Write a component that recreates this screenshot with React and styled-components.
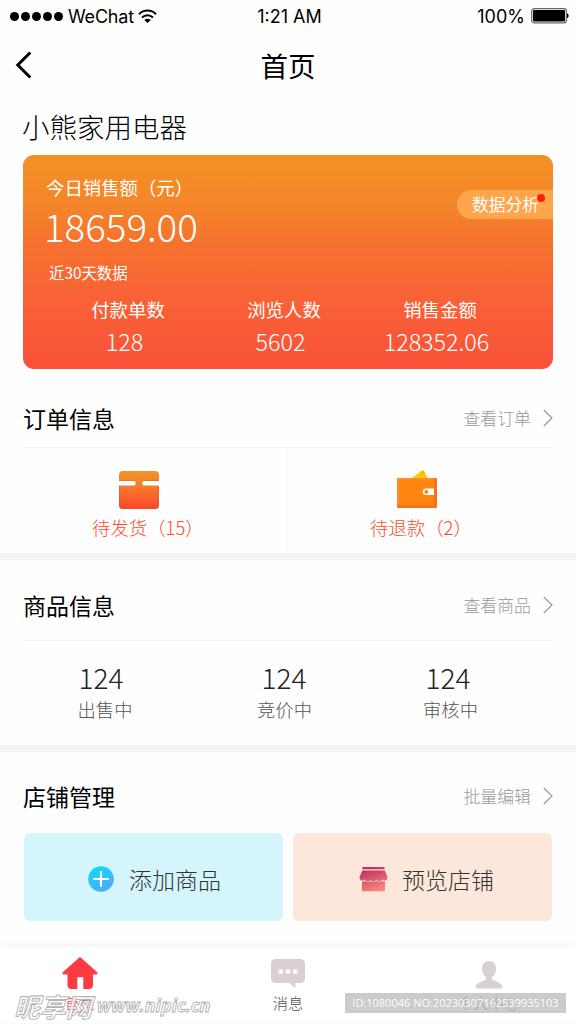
import React from "react";
import styled, { createGlobalStyle } from "styled-components";

const orders = [
  { label: "待发货（15）", icon: <BoxIcon />, left: 92 },
  { label: "待退款（2）", icon: <WalletIcon />, left: 82 },
];

const monthData = [
  { label: "付款单数", value: "128" },
  { label: "浏览人数", value: "5602" },
  { label: "销售金额", value: "128352.06" },
];

const goods = [
  { label: "出售中", value: "124", shift: 8 },
  { label: "竞价中", value: "124", shift: 1 },
  { label: "审核中", value: "124", shift: 5 },
];

export default function App() {
  return (
    <Page>
      <GlobalStyle />

      <StatusBar>
        <Carrier>
          <Signal>
            <i /><i /><i /><i /><i />
          </Signal>
          <span>WeChat</span>
          <WifiIcon />
        </Carrier>
        <Clock>1:21 AM</Clock>
        <Power>
          <span>100%</span>
          <BatteryIcon />
        </Power>
      </StatusBar>

      <NavBar>
        <BackIcon />
        <NavTitle>首页</NavTitle>
      </NavBar>

      <StoreName>小熊家用电器</StoreName>

      <SalesCard>
        <SalesTop>
          <div>
            <SalesLabel>今日销售额（元）</SalesLabel>
            <SalesTotal>18659.00</SalesTotal>
          </div>
          <Analysis>
            数据分析
            <RedDot />
          </Analysis>
        </SalesTop>
        <MonthLabel>近30天数据</MonthLabel>
        <MonthRow>
          {monthData.map((item) => (
            <MonthItem key={item.label}>
              <MonthName>{item.label}</MonthName>
              <MonthValue>{item.value}</MonthValue>
            </MonthItem>
          ))}
        </MonthRow>
      </SalesCard>

      <Section $height={184}>
        <SectionHead $height={79} $top={19} $line>
          <SectionTitle>订单信息</SectionTitle>
          <More>查看订单 <ArrowIcon /></More>
        </SectionHead>
        <OrderRow>
          {orders.map((item) => (
            <OrderItem key={item.label} $left={item.left}>
              {item.icon}
              <OrderLabel>{item.label}</OrderLabel>
            </OrderItem>
          ))}
        </OrderRow>
      </Section>
      <Band />

      <Section $height={185}>
        <SectionHead $height={81} $top={15} $line>
          <SectionTitle>商品信息</SectionTitle>
          <More>查看商品 <ArrowIcon /></More>
        </SectionHead>
        <GoodsRow>
          {goods.map((item) => (
            <GoodsItem key={item.label}>
              <GoodsValue $shift={item.shift}>{item.value}</GoodsValue>
              <GoodsLabel>{item.label}</GoodsLabel>
            </GoodsItem>
          ))}
        </GoodsRow>
      </Section>
      <Band />

      <Section $height={195}>
        <SectionHead $height={81} $top={14}>
          <SectionTitle>店铺管理</SectionTitle>
          <More>批量编辑 <ArrowIcon /></More>
        </SectionHead>
        <ShopRow>
          <ShopButton $color="#d5f5fd" $left={64} $gap={15}>
            <PlusIcon />
            添加商品
          </ShopButton>
          <ShopButton $color="#fde7da" $left={66} $gap={14}>
            <ShopIcon />
            预览店铺
          </ShopButton>
        </ShopRow>
      </Section>

      <TabBar>
        <Tab $active $left={62}>
          <HomeIcon />
          <span>首页</span>
        </Tab>
        <Tab $left={271}>
          <MessageIcon />
          <span>消息</span>
        </Tab>
        <Tab $left={458}>
          <UserIcon />
          <span>个人中心</span>
        </Tab>
        <SiteMark>
          <b>昵享网</b>
          <em>www.nipic.cn</em>
        </SiteMark>
        <IdMark>ID:1080046 NO:20230307162539935103</IdMark>
      </TabBar>
    </Page>
  );
}

function WifiIcon() {
  return (
    <svg width="19" height="15" viewBox="0 0 19 15" fill="none" stroke="#000" strokeWidth="2">
      <path d="M1 5.2C5.8 .4 13.2 .4 18 5.2" />
      <path d="M4 8.4c3.2-3 7.8-3 11 0" />
      <path d="M6.3 10.9c1.9-1.7 4.5-1.7 6.4 0L9.5 14z" fill="#000" stroke="none" />
    </svg>
  );
}

function BatteryIcon() {
  return (
    <svg width="38" height="16" viewBox="0 0 38 16">
      <rect x=".7" y=".7" width="34.6" height="14.2" rx="2.4" fill="#fff" stroke="#666" strokeWidth="1.2" />
      <rect x="2" y="2" width="32" height="11.6" rx="1" fill="#000" />
      <path d="M36 5.3c2.2.8 2.2 4.2 0 5z" fill="#000" />
    </svg>
  );
}

function BackIcon() {
  return (
    <svg width="18" height="28" viewBox="0 0 18 28" fill="none" stroke="#000" strokeWidth="3">
      <path d="M15.3 1.5L2.8 14l12.5 12.5" />
    </svg>
  );
}

function ArrowIcon() {
  return (
    <svg width="10" height="18" viewBox="0 0 10 18" fill="none" stroke="#999" strokeWidth="1.2">
      <path d="M.8 1L9 9 .8 17" />
    </svg>
  );
}

function BoxIcon() {
  return (
    <svg width="42" height="40" viewBox="0 0 42 40">
      <defs>
        <linearGradient id="box" x1="0" y1="0" x2="0" y2="1">
          <stop offset="0" stopColor="#f29428" />
          <stop offset=".35" stopColor="#f5802c" />
          <stop offset=".9" stopColor="#fd4f2c" />
          <stop offset="1" stopColor="#ee4a2a" />
        </linearGradient>
      </defs>
      <path
        d="M5 1h32a4 4 0 0 1 4 4v6H26a1.5 1.5 0 0 0-1.500 1.500V14a1.500 1.500 0 0 0 1.500 1.500h15V35a4 4 0 0 1-4 4H5a4 4 0 0 1-4-4V15.500h15a1.500 1.500 0 0 0 1.500-1.500v-1.500A1.500 1.500 0 0 0 16 11H1V5a4 4 0 0 1 4-4z"
        fill="url(#box)"
      />
      <path d="M1.500 10.400h15M25.500 10.400h15" stroke="#d97a20" strokeWidth="1" opacity=".7" />
      <path d="M1.600 17v18a3.400 3.400 0 0 0 3.400 3.400h32a3.400 3.400 0 0 0 3.400-3.400V17" fill="none" stroke="#e3552a" strokeWidth="1.200" opacity=".55" />
    </svg>
  );
}

function WalletIcon() {
  return (
    <svg width="42" height="40" viewBox="0 0 42 40">
      <path d="M15 8.500L25.500 .8q1.500-1 2.400.5l4.300 7.200z" fill="#fdc90c" />
      <path d="M25.500 .8q1.500-1 2.400.5l1.400 2.400-4.500 1.500z" fill="#fbb90f" />
      <rect x="1" y="8" width="40" height="30" rx="1.200" fill="#ff6e1c" />
      <path d="M1 9.200A1.200 1.200 0 0 1 2.200 8H38v27H1z" fill="#ff8b31" />
      <rect x="3.500" y="10" width="34.500" height="25" rx="2" fill="#ff8410" />
      <path d="M38 18.500v6.500h-8a3.250 3.250 0 0 1 0-6.500z" fill="#fff" />
      <circle cx="30.300" cy="21.800" r="1.900" fill="#ff7a14" />
    </svg>
  );
}

function PlusIcon() {
  return (
    <svg width="26" height="26" viewBox="0 0 26 26">
      <defs>
        <linearGradient id="plus" x1=".25" y1="0" x2=".75" y2="1">
          <stop offset="0" stopColor="#0fdcfb" />
          <stop offset="1" stopColor="#50a5fc" />
        </linearGradient>
      </defs>
      <circle cx="13" cy="13" r="12.800" fill="url(#plus)" />
      <path d="M13 6v14M6 13h14" stroke="#fff" strokeWidth="2.200" strokeLinecap="round" />
    </svg>
  );
}

function ShopIcon() {
  return (
    <svg width="29" height="25" viewBox="0 0 29 25">
      <defs>
        <linearGradient id="shop" x1="10" y1="0" x2="19" y2="25" gradientUnits="userSpaceOnUse">
          <stop offset="0" stopColor="#b82f63" />
          <stop offset="1" stopColor="#ff8a79" />
        </linearGradient>
      </defs>
      <g fill="url(#shop)">
        <path d="M3.500 0h22v2.300h-22z" />
        <path d="M3.300 3.500h22.400L28.500 10c0 3.800-3.600 4.800-5.300 2.200-1.500 3-4.600 3-5.900.2-1.200 2.800-4.400 2.800-5.700 0-1.300 2.800-4.400 2.800-5.800-.2C4.100 14.800.5 13.800.5 10z" />
        <path d="M3 14.800c1.300.1 2.200-.3 3-1 1.700 1.800 4.100 1.700 5.700 0 1.600 1.800 4 1.800 5.600 0 1.600 1.700 4 1.800 5.700 0 .9.800 1.900 1.100 3 1V23a1.200 1.200 0 0 1-1.200 1.200H4.200A1.200 1.200 0 0 1 3 23z" />
      </g>
    </svg>
  );
}

function HomeIcon() {
  return (
    <svg width="36" height="32" viewBox="0 0 36 32" fill="#fd3c42">
      <path d="M16.700 .9q1.300-1.100 2.600 0l15.600 14c1.500 1.500.4 3-1.300 2.700H31V28q0 4-4 4h-5.700V20.300h-6V32H9.500q-4 0-4-4V17.600H2.400C.7 17.900-.4 16.400 1.100 14.900z" />
    </svg>
  );
}

function MessageIcon() {
  return (
    <svg width="34" height="30" viewBox="0 0 34 30">
      <path d="M4.500 0h25A4.500 4.500 0 0 1 34 4.500v15a4.500 4.500 0 0 1-4.500 4.500H24.300v5.300L18.500 24h-14A4.500 4.500 0 0 1 0 19.500v-15A4.500 4.500 0 0 1 4.500 0z" fill="#d8d0d2" />
      <g fill="#fff">
        <circle cx="9.800" cy="12.500" r="2.400" />
        <circle cx="17" cy="12.500" r="2.400" />
        <circle cx="24.200" cy="12.500" r="2.400" />
      </g>
    </svg>
  );
}

function UserIcon() {
  return (
    <svg width="28" height="28" viewBox="0 0 28 28" fill="#d8d0d2">
      <path d="M14 0c4.200 0 7 3 7 7.500 0 3.800-1.600 7-4 8.800v2c.4 1.700 9.800 2.700 10.200 7.200V26q0 1.500-1.500 1.500H2.300Q.8 27.500.8 26v-.5c.4-4.500 9.800-5.500 10.200-7.200v-2C8.600 14.500 7 11.300 7 7.500 7 3 9.800 0 14 0z" />
    </svg>
  );
}

const GlobalStyle = createGlobalStyle`
  * {
    box-sizing: border-box;
  }
  body {
    margin: 0;
    background: #fff;
  }
  svg {
    display: block;
    flex-shrink: 0;
  }
`;

const Page = styled.div`
  width: 576px;
  height: 1024px;
  overflow: hidden;
  display: flex;
  flex-direction: column;
  background: #fefefe;
  color: #000;
  font-family: "Noto Sans CJK SC", sans-serif;
  font-weight: 300;
  white-space: nowrap;
`;

const StatusBar = styled.div`
  display: grid;
  grid-template-columns: 1fr 80px 1fr;
  align-items: center;
  height: 32px;
  padding: 0 7px 0 10px;
  font-family: Inter, sans-serif;
  font-size: 18px;
  font-weight: 400;
`;
const Carrier = styled.div`
  display: flex;
  align-items: center;
  gap: 4px;
  letter-spacing: -0.2px;
`;
const Signal = styled.div`
  display: flex;
  gap: 2px;
  margin-right: 1px;

  i {
    width: 9px;
    height: 9px;
    border-radius: 50%;
    background: #000;
  }
`;
const Clock = styled.div`
  text-align: center;
`;
const Power = styled.div`
  display: flex;
  align-items: center;
  justify-content: flex-end;
  gap: 6px;
`;

const NavBar = styled.div`
  display: grid;
  grid-template-columns: 60px 1fr 60px;
  align-items: center;
  height: 66px;
  padding: 0 15px;
`;
const NavTitle = styled.div`
  text-align: center;
  font-size: 27.5px;
  line-height: 40px;
  font-weight: 400;
`;
const StoreName = styled.div`
  height: 57px;
  padding: 8px 22px 0;
  font-size: 27.5px;
  line-height: 40px;
`;

const SalesCard = styled.div`
  height: 214px;
  flex-shrink: 0;
  margin: 0 23px;
  padding-top: 20px;
  border-radius: 11px;
  color: #fff;
  background: linear-gradient(#f39123, #f4862a 22%, #f6722f 42%, #f86335 65%, #fb5139);
`;
const SalesTop = styled.div`
  display: flex;
  justify-content: space-between;
  height: 84px;
  padding-left: 23px;
`;
const SalesLabel = styled.div`
  font-size: 18.4px;
  line-height: 24px;
  font-weight: 400;
`;
const SalesTotal = styled.div`
  margin-left: -2px;
  font-size: 38.5px;
  line-height: 52px;
`;
const Analysis = styled.div`
  position: relative;
  width: 96px;
  height: 29px;
  margin-top: 15px;
  padding-left: 15px;
  border-radius: 15px 0 0 15px;
  background: #ffa64d;
  font-size: 16.8px;
  line-height: 28px;
  font-weight: 400;
`;
const RedDot = styled.div`
  position: absolute;
  top: 4px;
  right: 8px;
  width: 8px;
  height: 8px;
  border-radius: 50%;
  background: #fe1d08;
`;
const MonthLabel = styled.div`
  padding-left: 26px;
  font-size: 15.4px;
  line-height: 26px;
  font-weight: 400;
`;
const MonthRow = styled.div`
  display: grid;
  grid-template-columns: repeat(3, 156px);
  padding: 11px 0 0 27px;
`;
const MonthItem = styled.div`
  text-align: center;
`;
const MonthName = styled.div`
  font-size: 18.4px;
  line-height: 26px;
  font-weight: 400;
`;
const MonthValue = styled.div`
  padding-right: 7px;
  font-size: 23.300px;
  line-height: 38px;
`;

const Section = styled.div`
  height: ${(props) => props.$height}px;
  flex-shrink: 0;
`;
const SectionHead = styled.div`
  display: flex;
  justify-content: space-between;
  height: ${(props) => props.$height}px;
  margin: 0 23px;
  padding-top: ${(props) => props.$top}px;
  border-bottom: ${(props) => (props.$line ? "1px solid #f3f3f3" : "0")};
  line-height: 60px;
`;
const SectionTitle = styled.div`
  font-size: 23px;
  font-weight: 400;
`;
const More = styled.div`
  display: flex;
  align-items: center;
  gap: 12px;
  height: 60px;
  color: #999;
  font-size: 16.900px;
`;
const Band = styled.div`
  height: 7px;
  flex-shrink: 0;
  background: #f4f4f4;
`;

const OrderRow = styled.div`
  display: grid;
  grid-template-columns: 288px 288px;
  height: 105px;
`;
const OrderItem = styled.div`
  padding: 22px 0 0 ${(props) => props.$left}px;

  &:first-child {
    border-right: 1px solid #f6f6f6;
  }
  svg {
    margin-left: 26px;
  }
`;
const OrderLabel = styled.div`
  color: #fd4a2d;
  font-size: 18.400px;
  line-height: 34px;
`;

const GoodsRow = styled.div`
  display: grid;
  grid-template-columns: 180px 179px 153px;
  padding: 18px 0 0 15px;
  text-align: center;
`;
const GoodsItem = styled.div``;
const GoodsValue = styled.div`
  padding-right: ${(props) => props.$shift}px;
  color: #222;
  font-size: 28px;
  line-height: 36px;
`;
const GoodsLabel = styled.div`
  color: #555;
  font-size: 18.300px;
  line-height: 28px;
`;

const ShopRow = styled.div`
  display: grid;
  grid-template-columns: 259px 259px;
  gap: 10px;
  padding-left: 24px;
`;
const ShopButton = styled.div`
  display: flex;
  align-items: center;
  gap: ${(props) => props.$gap}px;
  height: 88px;
  padding: 4px 0 0 ${(props) => props.$left}px;
  border-radius: 6px;
  background: ${(props) => props.$color};
  color: #333;
  font-size: 23px;
`;

const TabBar = styled.div`
  position: relative;
  display: grid;
  height: 76px;
  flex-shrink: 0;
  background: #fff;
  box-shadow: 0 -1px 5px rgba(0, 0, 0, 0.06);
`;
const Tab = styled.div`
  grid-area: 1 / 1;
  justify-self: start;
  display: flex;
  flex-direction: column;
  align-items: center;
  justify-content: flex-end;
  height: 68px;
  margin-left: ${(props) => props.$left}px;
  color: ${(props) => (props.$active ? "#fd3c42" : "#554d50")};
  font-size: 15.300px;
  line-height: 26px;
`;
const SiteMark = styled.div`
  position: absolute;
  left: 14px;
  top: 43px;
  display: flex;
  align-items: center;
  gap: 5px;
  height: 30px;
  color: rgba(255, 255, 255, 0.8);
  -webkit-text-stroke: 0.8px #aaa;

  b {
    font-size: 26px;
    font-style: italic;
    font-weight: 700;
  }
  em {
    font-family: "Open Sans", sans-serif;
    font-size: 18px;
    font-weight: 700;
  }
`;
const IdMark = styled.div`
  position: absolute;
  left: 345px;
  top: 46px;
  width: 221px;
  height: 20px;
  background: rgba(190, 190, 190, 0.8);
  color: #fff;
  font-family: "Open Sans", sans-serif;
  font-size: 11px;
  font-weight: 400;
  line-height: 20px;
  text-align: center;
`;
